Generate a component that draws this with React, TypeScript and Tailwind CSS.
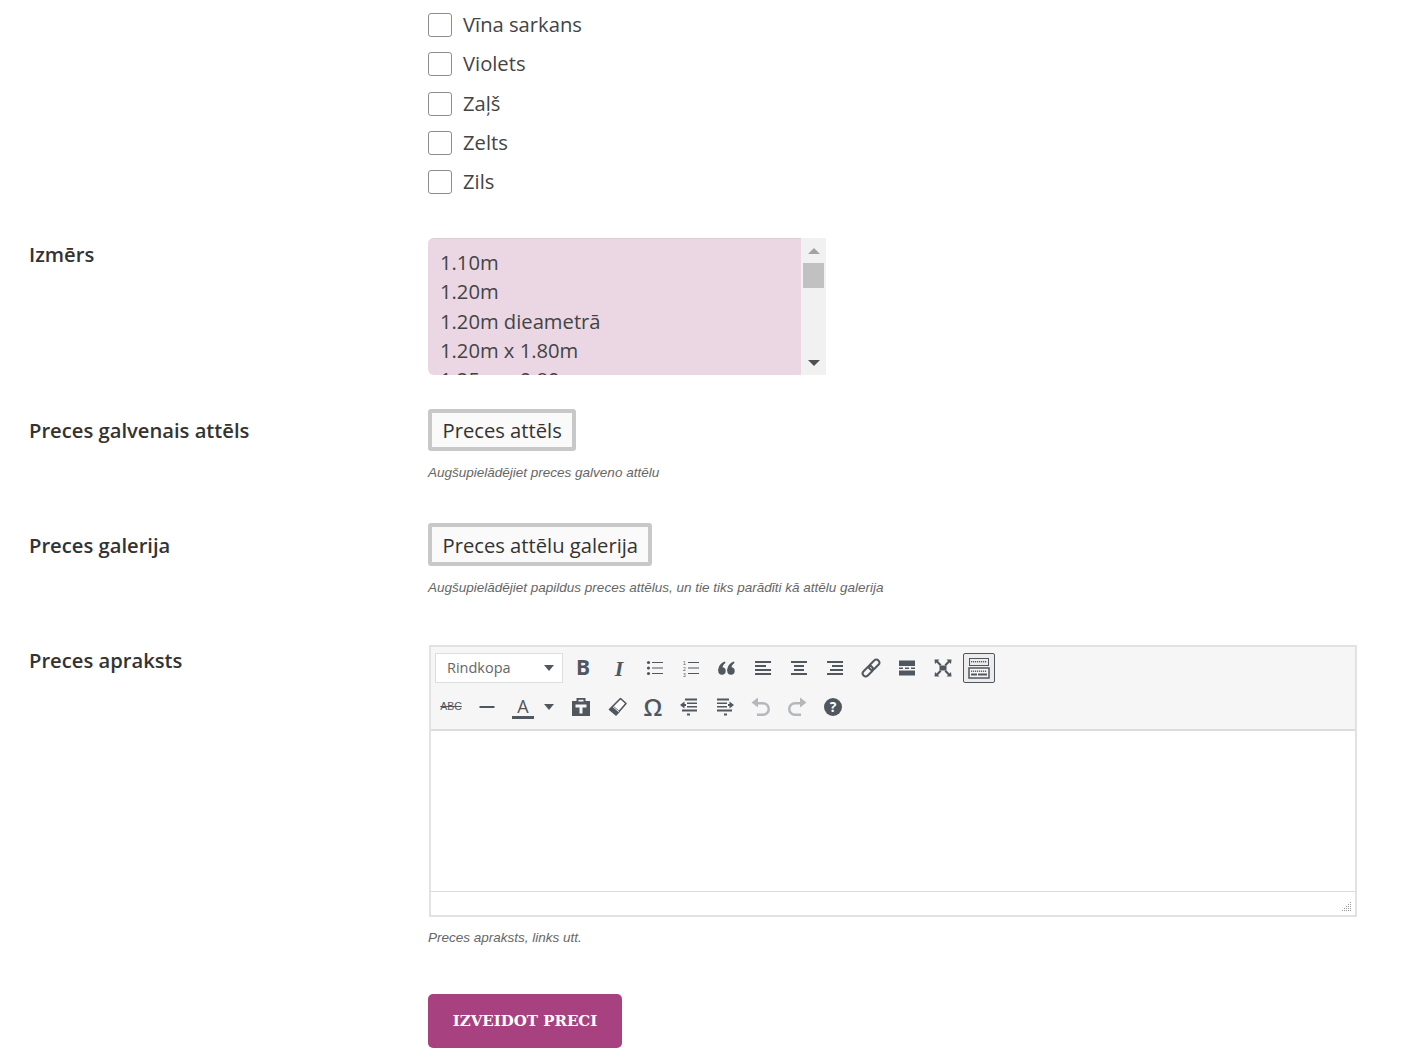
const colours = ["Vīna sarkans", "Violets", "Zaļš", "Zelts", "Zils"];
const sizes = ["1.10m", "1.20m", "1.20m dieametrā", "1.20m x 1.80m", "1.25m x 0.80m"];

function Ico({ children, muted }: { children: React.ReactNode; muted?: boolean }) {
  return (
    <div className={`w-9 h-[30px] flex items-center justify-center ${muted ? "text-[#b4b8bc]" : "text-[#50575e]"}`}>
      <svg width="20" height="20" viewBox="0 0 20 20" fill="currentColor">
        {children}
      </svg>
    </div>
  );
}

function Letter({ children, className }: { children: React.ReactNode; className: string }) {
  return <div className={`w-9 h-[30px] flex items-center justify-center text-[#50575e] ${className}`}>{children}</div>;
}

function Label({ children }: { children: React.ReactNode }) {
  return <div className="w-[399px] shrink-0 text-[20.2px] leading-[30px] font-semibold text-[#333]">{children}</div>;
}

function Hint({ children, className }: { children: React.ReactNode; className: string }) {
  return <p className={`font-['Liberation_Sans',Arial,sans-serif] italic text-[13.5px] leading-[20px] text-[#666] ${className}`}>{children}</p>;
}

function UploadButton({ children, tall }: { children: React.ReactNode; tall?: boolean }) {
  return (
    <button className={`block ${tall ? "h-[43px]" : "h-[42px]"} pl-[10.5px] pr-[10px] border-4 border-[#c8c8c8] rounded-[3px] bg-[#fafafa] text-[20.2px] leading-[34px] text-[#333]`}>
      {children}
    </button>
  );
}

function Dots({ y }: { y: number }) {
  return (
    <g fill="currentColor">
      {[4, 6, 8, 10, 12, 14, 16, 18].map((x) => (
        <rect key={x} x={x} y={y} width="1.2" height="1.4" />
      ))}
    </g>
  );
}

export default function App() {
  return (
    <div className="bg-white min-h-[1062px] pl-[29px] pt-[13px] font-['Open_Sans',sans-serif] text-[#444]">
      {/* Colour checkboxes */}
      <div className="ml-[399px] flex flex-col gap-[15.25px]">
        {colours.map((c) => (
          <label key={c} className="flex items-center h-6">
            <span className="w-6 h-6 rounded-[3px] border-[1.5px] border-[#8d8d8d] bg-white" />
            <span className="ml-[11px] mb-[2px] text-[20.2px] leading-6">{c}</span>
          </label>
        ))}
      </div>

      {/* Size */}
      <div className="flex mt-[44px]">
        <div className="pt-px"><Label>Izmērs</Label></div>
        <div className="w-[398px] h-[137px] flex overflow-hidden">
          <div className="flex-1 bg-[#ead7e3] rounded-l-[6px] pt-[9px] pl-3 overflow-hidden border-t border-[#d9ccd4]">
            {sizes.map((s) => (
              <div key={s} className="text-[20.2px] leading-[29.33px] whitespace-nowrap">{s}</div>
            ))}
          </div>
          <div className="w-[25px] bg-[#f1f1f1] flex flex-col items-center">
            <div className="h-[25px] flex items-center justify-center">
              <div className="w-0 h-0 border-x-[6px] border-x-transparent border-b-[6px] border-b-[#a3a3a3]" />
            </div>
            <div className="w-[21px] h-[25px] bg-[#c1c1c1]" />
            <div className="mt-auto h-[25px] flex items-center justify-center">
              <div className="w-0 h-0 border-x-[6px] border-x-transparent border-t-[6px] border-t-[#505050]" />
            </div>
          </div>
        </div>
      </div>

      {/* Main image */}
      <div className="flex mt-[34px]">
        <div className="pt-[6px]"><Label>Preces galvenais attēls</Label></div>
        <div>
          <UploadButton>Preces attēls</UploadButton>
          <Hint className="mt-[12px]">Augšupielādējiet preces galveno attēlu</Hint>
        </div>
      </div>

      {/* Gallery */}
      <div className="flex mt-[40px]">
        <div className="pt-[7px]"><Label>Preces galerija</Label></div>
        <div>
          <UploadButton tall>Preces attēlu galerija</UploadButton>
          <Hint className="mt-[12px]">Augšupielādējiet papildus preces attēlus, un tie tiks parādīti kā attēlu galerija</Hint>
        </div>
      </div>

      {/* Description */}
      <div className="flex mt-[47px]">
        <div><Label>Preces apraksts</Label></div>
        <div className="w-[929px]">
          <div className="ml-px w-[928px] h-[272px] border-2 border-[#e2e2e2] flex flex-col">
            <div className="h-[84px] bg-[#f6f6f6] border-b-2 border-[#dcdcdc] pl-px pt-[5px]">
              <div className="flex items-center h-[32px]">
                <div className="ml-[3px] mr-[2px] w-[128px] h-[30px] bg-white border border-[#dedede] flex items-center pl-[11px] pr-[8px] text-[14.5px] text-[#666]">
                  <span className="flex-1">Rindkopa</span>
                  <span className="w-0 h-0 border-x-[5px] border-x-transparent border-t-[6px] border-t-[#50575e]" />
                </div>
                <Letter className="font-bold text-[21px] font-['Open_Sans',sans-serif]">B</Letter>
                <Letter className="italic font-bold text-[22px] font-['Liberation_Serif',serif]">I</Letter>
                <Ico>
                  <circle cx="3.5" cy="4.5" r="1.6" /><circle cx="3.5" cy="10" r="1.6" /><circle cx="3.5" cy="15.5" r="1.6" />
                  <rect x="7" y="4" width="11" height="1" /><rect x="7" y="9.5" width="11" height="1" /><rect x="7" y="15" width="11" height="1" />
                </Ico>
                <Ico>
                  <text x="2" y="6.5" fontSize="5" fontFamily="Liberation Sans">1</text><text x="2" y="12.5" fontSize="5" fontFamily="Liberation Sans">2</text><text x="2" y="18.5" fontSize="5" fontFamily="Liberation Sans">3</text>
                  <rect x="7" y="4" width="11" height="1" /><rect x="7" y="9.5" width="11" height="1" /><rect x="7" y="15" width="11" height="1" />
                </Ico>
                <Ico>
                  <circle cx="5" cy="13" r="3.7" /><circle cx="14" cy="13" r="3.7" />
                  <path d="M1.3 13C1.3 8 4 4.5 8 3.5L8.5 5C6.5 6 5.5 8 5.5 10L5 13zM10.3 13C10.3 8 13 4.5 17 3.5L17.5 5C15.5 6 14.5 8 14.5 10L14 13z" />
                </Ico>
                <Ico>
                  <rect x="2" y="3" width="16" height="2" /><rect x="2" y="7" width="11" height="2" /><rect x="2" y="11" width="16" height="2" /><rect x="2" y="15" width="16" height="2" />
                </Ico>
                <Ico>
                  <rect x="2" y="3" width="16" height="2" /><rect x="5" y="7" width="10" height="2" /><rect x="5" y="11" width="10" height="2" /><rect x="2" y="15" width="16" height="2" />
                </Ico>
                <Ico>
                  <rect x="2" y="3" width="16" height="2" /><rect x="7" y="7" width="11" height="2" /><rect x="5" y="11" width="13" height="2" /><rect x="2" y="15" width="16" height="2" />
                </Ico>
                <Ico>
                  <g fill="none" stroke="currentColor" strokeWidth="2">
                    <rect x="-0.5" y="7" width="12" height="6" rx="3" transform="rotate(-45 10 10)" />
                    <rect x="8.5" y="7" width="12" height="6" rx="3" transform="rotate(-45 10 10)" />
                  </g>
                </Ico>
                <Ico>
                  <rect x="2" y="2.5" width="16" height="5.5" /><rect x="2" y="9.5" width="4" height="1.5" /><rect x="8" y="9.5" width="4" height="1.5" /><rect x="14" y="9.5" width="4" height="1.5" /><rect x="2" y="12.5" width="16" height="5" />
                </Ico>
                <Ico>
                  <rect x="6.5" y="7.5" width="7" height="5" />
                  <path d="M1.5 1.5h5L5 3l3.5 3.5-1.5 1.5L3.5 4.5 2 6zM18.5 1.5h-5L15 3l-3.5 3.5 1.500 1.500 3.500-3.500L18 6zM1.5 18.5h5L5 17l3.500-3.500-1.500-1.500-3.500 3.500L2 14zM18.5 18.5h-5L15 17l-3.500-3.500 1.500-1.500 3.500 3.500L18 14z" />
                </Ico>
                <div className="w-[32px] h-[30px] ml-[2px] border border-[#50575e] rounded-[2px] bg-[#ececec] flex items-center justify-center text-[#50575e]">
                  <svg width="24" height="24" viewBox="0 0 24 24" fill="none">
                    <rect x="2.5" y="2.5" width="19" height="7" stroke="currentColor" />
                    <Dots y={5} />
                    <rect x="2" y="12" width="20" height="10" stroke="currentColor" strokeWidth="1.5" fill="#f6f6f6" />
                    <Dots y={14.5} />
                    <rect x="4" y="17.5" width="6" height="2" fill="currentColor" />
                    <rect x="11" y="17.5" width="9" height="2" fill="currentColor" />
                  </svg>
                </div>
              </div>
              <div className="flex items-center h-[32px] mt-[7px] ml-px">
                <Letter className="text-[10.5px] line-through font-['Liberation_Sans',sans-serif]">ABC</Letter>
                <Ico><rect x="2.5" y="9" width="15" height="2" /></Ico>
                <div className="w-[58px] h-[30px] flex items-center">
                  <div className="w-9 flex flex-col items-center">
                    <span className="text-[18px] leading-[20px] text-[#50575e]">A</span>
                    <span className="block w-[22px] h-[3px] bg-[#50575e]" />
                  </div>
                  <span className="ml-[3px] w-0 h-0 border-x-[5px] border-x-transparent border-t-[6px] border-t-[#50575e]" />
                </div>
                <Ico>
                  <path d="M1 4h4.5V1h9v3H19v15H1z" />
                  <rect x="7.5" y="2.8" width="5" height="1.7" fill="#f6f6f6" />
                  <path d="M4.5 7.5h11v3h-4V16.5h-3V10.5h-4z" fill="#f6f6f6" />
                </Ico>
                <Ico>
                  <path d="M13.5 1.5 19 6.5 9 18l-6.5-5.5z" fill="#fff" stroke="currentColor" strokeWidth="1.6" strokeLinejoin="round" />
                  <path d="M6 8.5 13 14.5 9 18l-6.5-5.5z" />
                  <path d="M6 9.8 11.8 14.7" stroke="#fff" strokeWidth="1" />
                </Ico>
                <Letter className="text-[24px] font-semibold">Ω</Letter>
                <Ico>
                  <rect x="6" y="1.5" width="12" height="2" /><rect x="8" y="5.5" width="10" height="1.5" /><rect x="8" y="9" width="10" height="1.5" /><rect x="3" y="12.5" width="15" height="2" /><rect x="8" y="16.5" width="3" height="2" />
                  <path d="M1 8 5.5 4.5V7H7v2H5.5v2.5z" />
                </Ico>
                <Ico>
                  <rect x="2" y="1.5" width="12" height="2" /><rect x="2" y="5.5" width="10" height="1.5" /><rect x="2" y="9" width="10" height="1.5" /><rect x="2" y="12.5" width="15" height="2" /><rect x="9" y="16.5" width="3" height="2" />
                  <path d="M19 8 14.5 4.5V7H13v2h1.5v2.5z" />
                </Ico>
                <Ico muted>
                  <path d="M7 0.5 0.5 5.5 7 10.500V7.500h5a4.500 4.500 0 0 1 0 9H6V19h6a7 7 0 0 0 0-14H7z" />
                </Ico>
                <Ico muted>
                  <path d="M13 0.5 19.500 5.500 13 10.500V7.500H8a4.500 4.500 0 0 0 0 9H14V19H8A7 7 0 0 1 8 5h5z" />
                </Ico>
                <div className="w-9 h-[30px] flex items-center justify-center">
                  <span className="w-[18px] h-[18px] rounded-full bg-[#50575e] text-white text-[14px] leading-[18px] font-bold text-center">?</span>
                </div>
              </div>
            </div>
            <div className="flex-1 bg-white" />
            <div className="relative h-[24px] border-t border-[#dcdcdc] bg-white">
              <svg className="absolute right-[3px] bottom-[3px]" width="11" height="11" viewBox="0 0 11 11" fill="#999">
                <rect x="9" y="1" width="1" height="1" /><rect x="9" y="3" width="1" height="1" /><rect x="7" y="3" width="1" height="1" />
                <rect x="9" y="5" width="1" height="1" /><rect x="7" y="5" width="1" height="1" /><rect x="5" y="5" width="1" height="1" />
                <rect x="9" y="7" width="1" height="1" /><rect x="7" y="7" width="1" height="1" /><rect x="5" y="7" width="1" height="1" /><rect x="3" y="7" width="1" height="1" />
                <rect x="9" y="9" width="1" height="1" /><rect x="7" y="9" width="1" height="1" /><rect x="5" y="9" width="1" height="1" /><rect x="3" y="9" width="1" height="1" /><rect x="1" y="9" width="1" height="1" />
              </svg>
            </div>
          </div>
          <Hint className="mt-[11px]">Preces apraksts, links utt.</Hint>
          <button className="block mt-[46px] w-[194px] h-[54px] rounded-[5px] bg-[#a8417f] text-white text-[15px] font-bold font-['DejaVu_Serif',serif]">
            IZVEIDOT PRECI
          </button>
        </div>
      </div>
    </div>
  );
}
